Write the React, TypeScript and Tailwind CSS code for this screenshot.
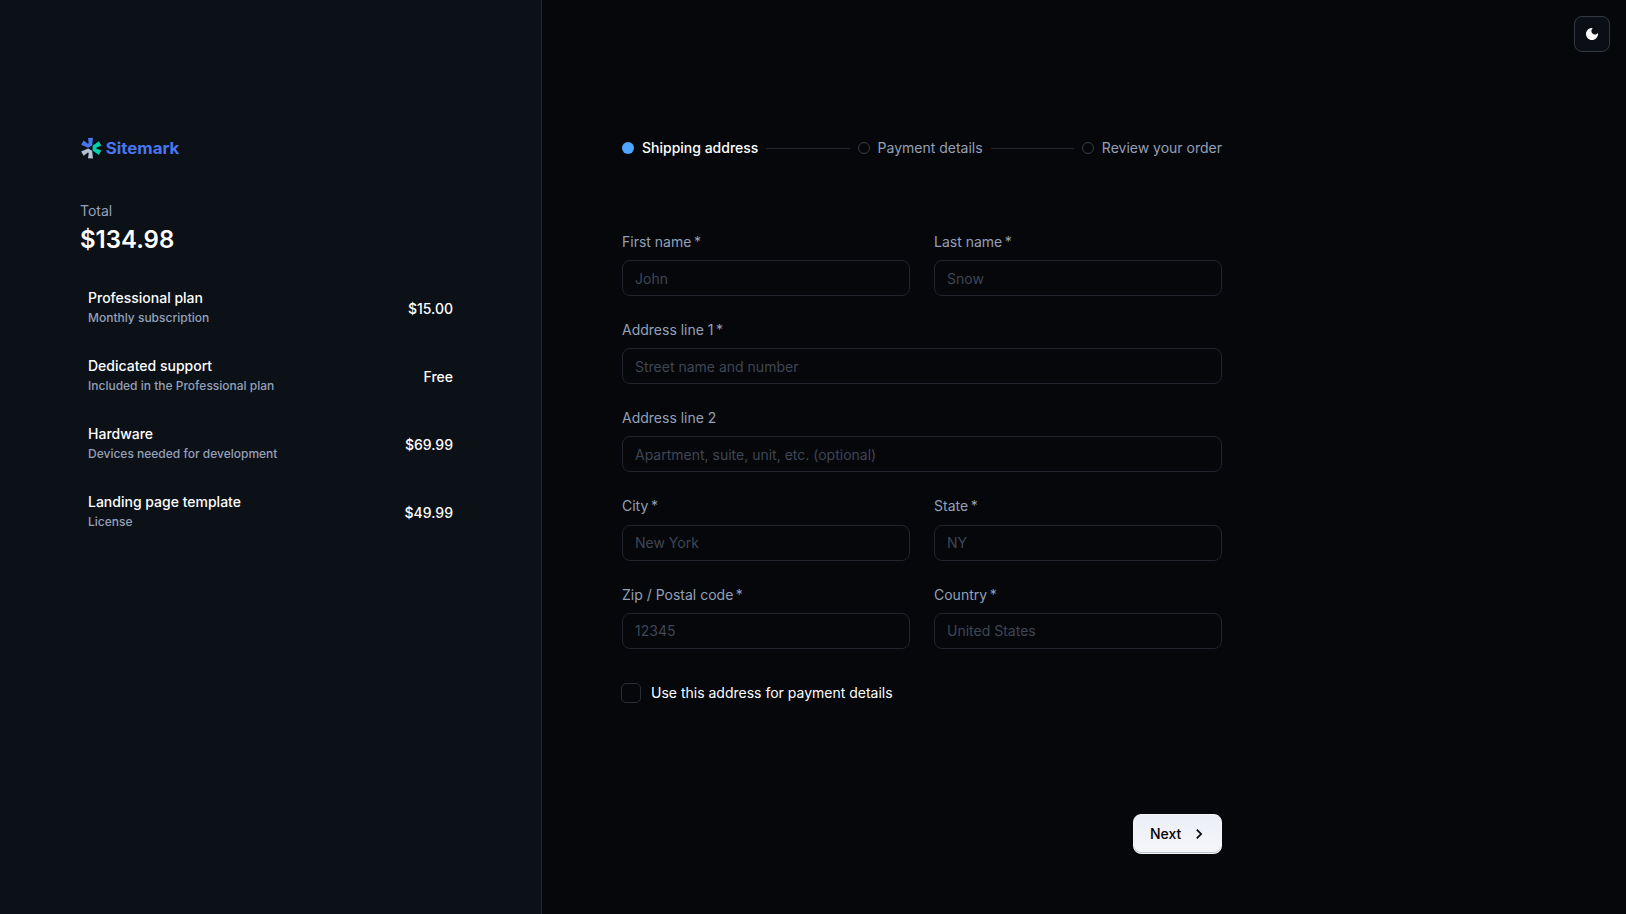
import React from "react";

type Product = { name: string; desc: string; price: string };

const products: Product[] = [
  { name: "Professional plan", desc: "Monthly subscription", price: "$15.00" },
  { name: "Dedicated support", desc: "Included in the Professional plan", price: "Free" },
  { name: "Hardware", desc: "Devices needed for development", price: "$69.99" },
  { name: "Landing page template", desc: "License", price: "$49.99" },
];

function Logo() {
  return (
    <svg width="100" height="22" viewBox="0 0 86 19" className="block" aria-label="Sitemark">
      <path
        fill="#B4C0D3"
        d="m.787 12.567 6.055-2.675 3.485 2.006.704 6.583-4.295-.035.634-4.577-.74-.422-3.625 2.817-2.218-3.697Z"
      />
      <path
        fill="#00D3AB"
        d="m10.714 11.616 5.352 3.908 2.112-3.767-4.295-1.725v-.845l4.295-1.76-2.112-3.732-5.352 3.908v4.013Z"
      />
      <path
        fill="#4876EF"
        d="m10.327 7.286.704-6.583-4.295.07.634 4.577-.74.422-3.66-2.816L.786 6.617l6.055 2.676 3.485-2.007Z"
      />
      <text
        x="22"
        y="14.7"
        fill="#4876EE"
        fontFamily="Inter, sans-serif"
        fontSize="14.2"
        fontWeight="700"
        textLength="63.6"
        lengthAdjust="spacingAndGlyphs"
      >
        Sitemark
      </text>
    </svg>
  );
}

function Field({
  label,
  placeholder,
  required = false,
  wide = false,
}: {
  label: string;
  placeholder: string;
  required?: boolean;
  wide?: boolean;
}) {
  return (
    <label className={wide ? "col-span-2 flex flex-col" : "flex flex-col"}>
      <span className="mb-2 text-sm leading-[20.125px] text-[#94a0b8]">
        {label}
        {required && <span>{"\u2009*"}</span>}
      </span>
      <input
        placeholder={placeholder}
        className="h-9 w-full rounded-lg border border-[#20242c] bg-[#05070a] px-3 text-sm text-white outline-none placeholder:text-[#3f4655] placeholder:opacity-100"
      />
    </label>
  );
}

function Step({ label, active = false }: { label: string; active?: boolean }) {
  return (
    <div className="flex items-center gap-2">
      <span
        className={
          active
            ? "size-3 rounded-full bg-[#4da6ff]"
            : "size-3 rounded-full border border-[#3a3e46]"
        }
      />
      <span
        className={
          active
            ? "text-sm font-medium text-white"
            : "text-sm text-[#94a0b8]"
        }
      >
        {label}
      </span>
    </div>
  );
}

export default function App() {
  return (
    <div className="flex h-screen w-full overflow-hidden bg-[#05070a] font-['Inter',sans-serif] text-white antialiased">
      <aside className="flex w-[542px] shrink-0 flex-col border-r border-[#22262e] bg-[#0c1017] px-20 pt-[137px]">
        <Logo />
        <div className="mt-[41px] text-sm leading-[21px] text-[#94a0b8]">Total</div>
        <div className="mt-px text-2xl leading-9 font-semibold">$134.98</div>
        <ul className="mt-[17px] flex flex-col">
          {products.map((p) => (
            <li key={p.name} className="flex h-[68px] items-center justify-between px-2">
              <div className="flex flex-col pb-1">
                <span className="text-sm leading-[21px] font-medium">{p.name}</span>
                <span className="text-xs leading-[19px] font-medium text-[#94a0b8]">{p.desc}</span>
              </div>
              <span className="text-sm leading-6 font-medium">{p.price}</span>
            </li>
          ))}
        </ul>
      </aside>

      <main className="flex flex-1 flex-col pt-4 pr-4 pl-20">
        <button
          aria-label="Toggle theme"
          className="flex size-9 items-center justify-center self-end rounded-lg border border-[#333942] bg-[#0b0e14]"
        >
          <svg width="16" height="16" viewBox="0 0 24 24" fill="#ffffff">
            <path d="M12 3c-4.970 0-9 4.030-9 9s4.030 9 9 9 9-4.030 9-9c0-.460-.040-.920-.100-1.360-.980 1.370-2.580 2.260-4.400 2.260-2.980 0-5.400-2.420-5.400-5.400 0-1.810.890-3.420 2.260-4.400-.440-.060-.900-.100-1.360-.100z" />
          </svg>
        </button>

        <div className="mt-[84px] flex w-[600px] flex-col">
          <div className="flex h-6 items-center">
            <Step label="Shipping address" active />
            <span className="mx-2 h-px flex-1 bg-[#22262e]" />
            <Step label="Payment details" />
            <span className="mx-2 h-px flex-1 bg-[#22262e]" />
            <Step label="Review your order" />
          </div>

          <form className="mt-[72px] grid grid-cols-2 gap-6" onSubmit={(e) => e.preventDefault()}>
            <Field label="First name" placeholder="John" required />
            <Field label="Last name" placeholder="Snow" required />
            <Field label="Address line 1" placeholder="Street name and number" required wide />
            <Field label="Address line 2" placeholder="Apartment, suite, unit, etc. (optional)" wide />
            <Field label="City" placeholder="New York" required />
            <Field label="State" placeholder="NY" required />
            <Field label="Zip / Postal code" placeholder="12345" required />
            <Field label="Country" placeholder="United States" required />
          </form>

          <label className="mt-[34px] -ml-px flex items-center gap-2.5">
            <input
              type="checkbox"
              className="size-5 appearance-none rounded-[5px] border border-[#2a2d33] bg-[#05070a]"
            />
            <span className="text-sm">Use this address for payment details</span>
          </label>

          <div className="mt-[111px] flex justify-end">
            <button className="flex h-10 w-[89px] items-center rounded-lg border border-[#f5f6fa] bg-linear-to-b from-[#ebeef5] to-[#f5f6fa] pl-4 text-sm font-medium text-black shadow-[inset_0_-1px_0_#b9c0ce]">
              Next
              <svg width="20" height="20" viewBox="0 0 24 24" fill="#05070a" className="ml-2">
                <path d="M10 6 8.590 7.410 13.170 12l-4.580 4.590L10 18l6-6z" />
              </svg>
            </button>
          </div>
        </div>
      </main>
    </div>
  );
}
